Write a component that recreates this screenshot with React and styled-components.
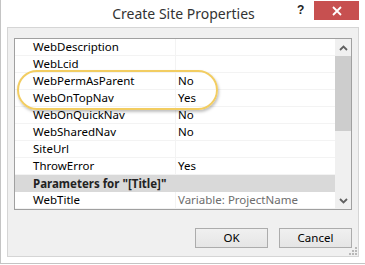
import React from "react"
import styled, { createGlobalStyle } from "styled-components"

const GlobalStyle = createGlobalStyle`
  html, body {
    margin: 0;
    padding: 0;
    background: #ffffff;
  }
  body {
    font-family: "Noto Sans", "Open Sans", sans-serif;
  }
`

const rows = [
  { name: "WebDescription", value: "" },
  { name: "WebLcid", value: "" },
  { name: "WebPermAsParent", value: "No" },
  { name: "WebOnTopNav", value: "Yes" },
  { name: "WebOnQuickNav", value: "No" },
  { name: "WebSharedNav", value: "No" },
  { name: "SiteUrl", value: "" },
  { name: "ThrowError", value: "Yes" },
  { name: 'Parameters for "[Title]"', header: true },
  { name: "WebTitle", value: "Variable: ProjectName", muted: true },
]

const App = () => (
  <>
    <GlobalStyle />
    <Window>
      <TitleBar>
        <Title>Create Site Properties</Title>
        <HelpButton>?</HelpButton>
        <CloseButton>
          <svg width="10" height="10" viewBox="0 0 10 10">
            <path d="M1 1 L9 9 M9 1 L1 9" stroke="#fff" strokeWidth="1.8" />
          </svg>
        </CloseButton>
      </TitleBar>
      <Panel>
        <ListBox>
          <Rows>
            {rows.map((r) =>
              r.header ? (
                <HeaderRow key={r.name}>{r.name}</HeaderRow>
              ) : (
                <Row key={r.name}>
                  <NameCell>{r.name}</NameCell>
                  <ValueCell $muted={r.muted}>{r.value}</ValueCell>
                </Row>
              )
            )}
          </Rows>
          <ScrollBar>
            <ArrowBox>
              <svg width="9" height="6" viewBox="0 0 9 6">
                <path d="M1 5 L4.5 1.5 L8 5" stroke="#606060" strokeWidth="1.8" fill="none" />
              </svg>
            </ArrowBox>
            <Thumb />
            <Track />
            <ArrowBox>
              <svg width="9" height="6" viewBox="0 0 9 6">
                <path d="M1 1 L4.5 4.5 L8 1" stroke="#606060" strokeWidth="1.8" fill="none" />
              </svg>
            </ArrowBox>
          </ScrollBar>
          <Highlight />
        </ListBox>
        <ButtonRow>
          <Button>OK</Button>
          <Button>Cancel</Button>
        </ButtonRow>
        <Grip>
          <svg width="8" height="8" viewBox="0 0 8 8" fill="#b8b8b8">
            <rect x="6" y="0" width="2" height="2" />
            <rect x="3" y="3" width="2" height="2" />
            <rect x="6" y="3" width="2" height="2" />
            <rect x="0" y="6" width="2" height="2" />
            <rect x="3" y="6" width="2" height="2" />
            <rect x="6" y="6" width="2" height="2" />
          </svg>
        </Grip>
      </Panel>
    </Window>
  </>
)

const Window = styled.div`
  width: 365px;
  height: 264px;
  box-sizing: border-box;
  border-left: 1px solid #c4c4c4;
  border-bottom: 1px solid #c4c4c4;
  background: #ffffff;
  display: flex;
  flex-direction: column;
  padding: 0 6px 6px 6px;
`

const TitleBar = styled.div`
  height: 27px;
  position: relative;
  display: flex;
  align-items: center;
  justify-content: center;
  flex-shrink: 0;
`

const Title = styled.div`
  font-size: 14px;
  color: #333333;
  margin-top: -1px;
  margin-left: 1px;
`

const HelpButton = styled.div`
  position: absolute;
  left: 290px;
  top: 3px;
  font-size: 12px;
  font-weight: bold;
  color: #222;
  font-family: "Liberation Sans", sans-serif;
`

const CloseButton = styled.div`
  position: absolute;
  left: 307px;
  top: 1px;
  width: 45px;
  height: 19px;
  background: #c75050;
  display: flex;
  align-items: center;
  justify-content: center;
`

const Panel = styled.div`
  flex: 1;
  position: relative;
  background: #f0f0f0;
  border: 1px solid #d5d5d5;
  padding: 10px 6px 0 6px;
  display: flex;
  flex-direction: column;
`

const ListBox = styled.div`
  position: relative;
  height: 172px;
  box-sizing: border-box;
  border: 1px solid #a0a0a0;
  background: #ffffff;
  display: flex;
`

const Rows = styled.div`
  flex: 1;
  display: flex;
  flex-direction: column;
`

const Row = styled.div`
  height: 17px;
  box-sizing: border-box;
  display: grid;
  grid-template-columns: 161px 1fr;
  border-bottom: 1px solid #f3f3f3;
  font-size: 11.5px;
  line-height: 16px;
  color: #000;
`

const NameCell = styled.div`
  padding-left: 18px;
  border-right: 1px solid #f3f3f3;
  white-space: nowrap;
`

const ValueCell = styled.div`
  padding-left: 2px;
  white-space: nowrap;
  color: ${(p) => (p.$muted ? "#6d6d6d" : "#000")};
`

const HeaderRow = styled.div`
  height: 17px;
  background: #d9d9d9;
  font-size: 11.5px;
  line-height: 17px;
  font-weight: bold;
  color: #222;
  padding-left: 18px;
`

const ScrollBar = styled.div`
  width: 16px;
  background: #f0f0f0;
  display: flex;
  flex-direction: column;
`

const ArrowBox = styled.div`
  height: 17px;
  display: flex;
  align-items: center;
  justify-content: center;
`

const Thumb = styled.div`
  height: 75px;
  background: #cdcdcd;
`

const Track = styled.div`
  flex: 1;
`

const Highlight = styled.div`
  position: absolute;
  left: 2px;
  top: 31px;
  width: 197px;
  height: 36px;
  border: 2px solid #f2cd62;
  border-radius: 20px;
  box-shadow: 1px 2px 3px rgba(0, 0, 0, 0.25);
  pointer-events: none;
`

const ButtonRow = styled.div`
  display: flex;
  justify-content: flex-end;
  gap: 11px;
  margin-top: 18px;
`

const Button = styled.div`
  width: 73px;
  height: 20px;
  box-sizing: border-box;
  border: 1px solid #acacac;
  background: linear-gradient(#f0f0f0, #e5e5e5);
  font-size: 11.5px;
  line-height: 18px;
  text-align: center;
  color: #000;
`

const Grip = styled.div`
  position: absolute;
  right: 1px;
  bottom: 1px;
  width: 8px;
  height: 8px;
  display: flex;
`

export default App
